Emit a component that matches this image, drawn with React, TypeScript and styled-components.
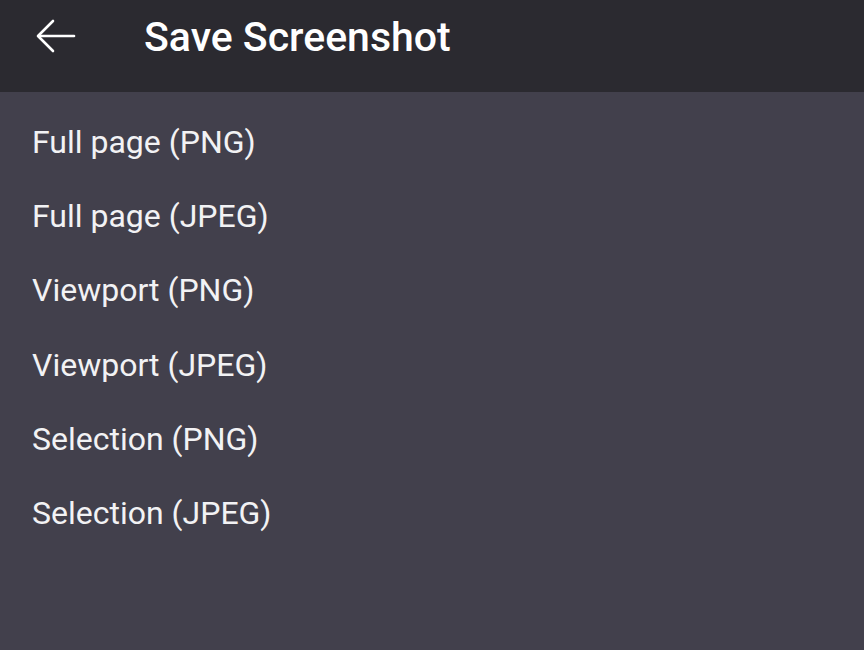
import React from "react";
import styled, { createGlobalStyle } from "styled-components";

const Global = createGlobalStyle`
  html, body { margin: 0; padding: 0; background: #42404c; }
  body { font-family: Roboto, "Noto Sans", sans-serif; }
`;

const Page = styled.div`
  width: 864px;
  height: 650px;
  display: flex;
  flex-direction: column;
  background: #42404c;
  overflow: hidden;
`;

const Header = styled.header`
  height: 92px;
  box-sizing: border-box;
  padding-bottom: 20px;
  background: #2b2a30;
  display: flex;
  flex-direction: column;
`;

const Toolbar = styled.div`
  height: 72px;
  display: flex;
  align-items: center;
`;

const BackButton = styled.button`
  width: 110px;
  height: 72px;
  padding: 0 0 0 36px;
  border: none;
  background: transparent;
  display: flex;
  align-items: center;
  cursor: pointer;
`;

const Title = styled.h1`
  margin: 0 0 0 34px;
  padding-top: 2px;
  font-size: 41px;
  font-weight: 500;
  color: #ffffff;
  letter-spacing: 0;
`;

const List = styled.ul`
  list-style: none;
  margin: 0;
  padding: 13px 0 0 0;
`;

const Item = styled.li`
  height: 74.2px;
  line-height: 74px;
  padding-left: 32px;
  font-size: 32px;
  color: #f2f2f4;
  cursor: pointer;
`;

const BackArrow = () => (
  <svg width="40" height="34" viewBox="0 0 40 34" fill="none" stroke="#ffffff" strokeWidth="2.6" strokeLinecap="round" strokeLinejoin="round">
    <path d="M38 17H3" />
    <path d="M17 2L2 17l15 15" />
  </svg>
);

const items = [
  "Full page (PNG)",
  "Full page (JPEG)",
  "Viewport (PNG)",
  "Viewport (JPEG)",
  "Selection (PNG)",
  "Selection (JPEG)",
];

export default function App() {
  return (
    <>
      <Global />
      <Page>
        <Header>
          <Toolbar>
            <BackButton aria-label="Back">
              <BackArrow />
            </BackButton>
            <Title>Save Screenshot</Title>
          </Toolbar>
        </Header>
        <List>
          {items.map((t) => (
            <Item key={t}>{t}</Item>
          ))}
        </List>
      </Page>
    </>
  );
}
